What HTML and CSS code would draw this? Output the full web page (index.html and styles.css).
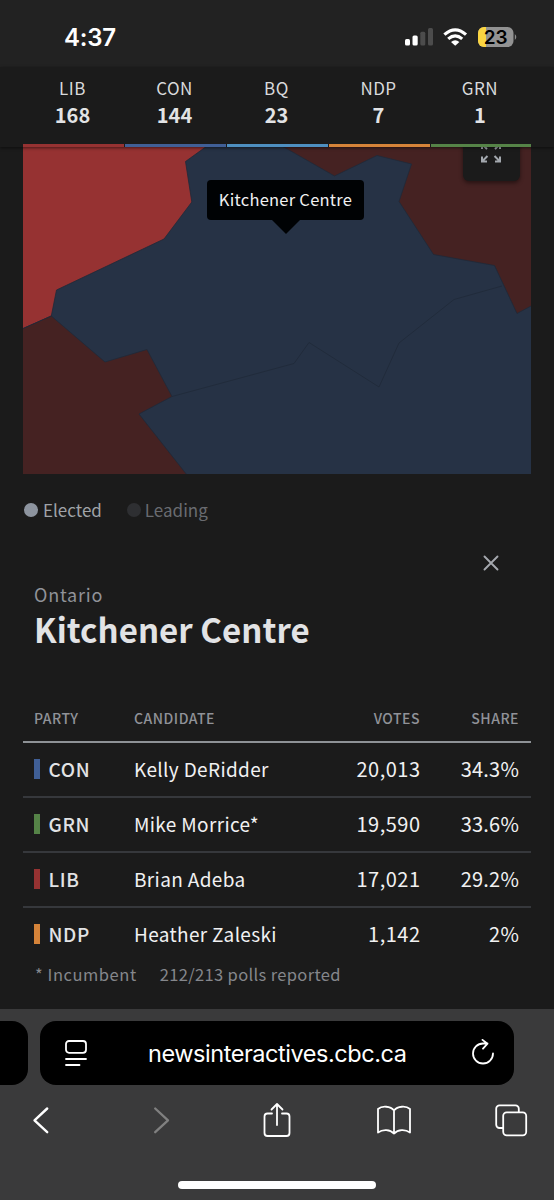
FILE: index.html
```html
<!DOCTYPE html>
<html lang="en">
<head>
<meta charset="utf-8">
<title>Kitchener Centre</title>
<link rel="stylesheet" href="styles.css">
</head>
<body>
<div class="status">
  <span class="clock">4:37</span>
  <svg class="status-icons" width="114" height="24" viewBox="403 25 114 24">
    <g fill="#fff"><rect x="405" y="39" width="5" height="6.500" rx="1.500"/><rect x="412.500" y="35.500" width="5.200" height="10" rx="1.500"/></g>
    <g fill="#4c4c4c"><rect x="420.300" y="31.700" width="5" height="13.800" rx="1.500"/><rect x="428" y="28" width="5" height="17.500" rx="1.500"/></g>
    <g fill="none" stroke="#fff" stroke-width="3.200"><path d="M444.400 34.600Q455.200 25 466 34.600"/><path d="M448.200 38.900Q455.200 33 462.200 38.900"/></g>
    <path d="M451 42Q455.200 38.500 459.400 42L455.200 45.800Z" fill="#fff"/>
    <path d="M484 27h23.500a6 6 0 0 1 6 6v8a6 6 0 0 1-6 6H484a6 6 0 0 1-6-6v-8a6 6 0 0 1 6-6Z" fill="#929292"/>
    <path d="M486 27h-2a6 6 0 0 0-6 6v8a6 6 0 0 0 6 6h2Z" fill="#fbd541"/>
    <path d="M514.800 34q3 3 0 6Z" fill="#8b8b8b"/>
    <text x="495.700" y="43.700" class="battery-text" text-anchor="middle">23</text>
  </svg>
</div>
<header class="seats">
  <div class="seat lib"><span>LIB</span><b>168</b></div>
  <div class="seat con"><span>CON</span><b>144</b></div>
  <div class="seat bq"><span>BQ</span><b>23</b></div>
  <div class="seat ndp"><span>NDP</span><b>7</b></div>
  <div class="seat grn"><span>GRN</span><b>1</b></div>
</header>
<main>
  <section class="map">
    <svg width="508" height="327" viewBox="23 147 508 327">
      <rect x="23" y="147" width="508" height="327" fill="#263245"/>
      <g stroke="#202a39" stroke-width=".8">
        <path d="M22 146H207L185.500 161.500 191.800 202 164 239 56.500 290 51.300 316 22 329Z" fill="#963232"/>
        <path d="M22 329 51.300 316 105 362 147 349.500 172 396.500 139 414 187 475H22Z" fill="#452222"/>
        <path d="M282 146 334.500 176 377 155.500 411.500 164 399 201.500 433.500 254.500 494.500 265.500 517 313.500 532 305.500V146Z" fill="#452222"/>
        <path d="M172 396.500 294 363.500 309 342.500 379 387 399 343 454 299.500 502 286" fill="none"/>
      </g>
    </svg>
    <div class="expand">
      <svg width="22" height="22" viewBox="0 0 22 22" fill="none" stroke="#a3a8ae" stroke-width="2"><path d="M2 7V2h5M2 2l5 5M15 2h5v5M20 2l-5 5M2 14.500v5h5M2 19.500l5.500-5.500M15 19.500h5v-5M20 19.500l-5.500-5.500"/></svg>
    </div>
    <div class="tooltip">Kitchener Centre</div>
  </section>
  <div class="legend"><i class="dot"></i><span>Elected</span><i class="dot dim"></i><span class="faint">Leading</span></div>
  <section class="riding">
    <svg class="close" width="18" height="18" viewBox="0 0 18 18"><path d="M2.500 2.500l13 13M15.500 2.500l-13 13" stroke="#a5a8ae" stroke-width="1.900" stroke-linecap="round"/></svg>
    <p class="province">Ontario</p>
    <h1>Kitchener Centre</h1>
    <div class="row head"><span>PARTY</span><span>CANDIDATE</span><span>VOTES</span><span>SHARE</span></div>
    <div class="row"><span class="party con">CON</span><span>Kelly DeRidder</span><span>20,013</span><span>34.3%</span></div>
    <div class="row"><span class="party grn">GRN</span><span>Mike Morrice*</span><span>19,590</span><span>33.6%</span></div>
    <div class="row"><span class="party lib">LIB</span><span>Brian Adeba</span><span>17,021</span><span>29.2%</span></div>
    <div class="row"><span class="party ndp">NDP</span><span>Heather Zaleski</span><span>1,142</span><span>2%</span></div>
    <div class="notes"><span>* Incumbent</span><span class="polls">212/213 polls reported</span></div>
  </section>
</main>
<footer class="browser">
  <div class="tabs">
    <div class="prev-tab"></div>
    <div class="address">
      <svg width="24" height="28" viewBox="0 0 24 28" fill="none" stroke="#fff" stroke-width="1.800" stroke-linecap="round"><rect x="2" y="2" width="20" height="11.800" rx="3"/><path d="M2 20h20M2 26h13.500"/></svg>
      <span>newsinteractives.cbc.ca</span>
      <svg width="24" height="28" viewBox="0 0 24 28" fill="none" stroke="#fff" stroke-width="1.800" stroke-linecap="round" stroke-linejoin="round"><path d="M22 14.500A10 10 0 1 1 12 4.500h4.500M11.500 .9l5 3.800-4.500 5"/></svg>
    </div>
  </div>
  <svg class="tools" width="554" height="44" viewBox="0 1098 554 44" fill="none" stroke="#fff" stroke-width="2" stroke-linecap="round" stroke-linejoin="round">
    <path d="M47.200 1108.500 34.500 1120.300 47.200 1132.200" stroke-width="2.400"/>
    <path d="M155.200 1108.500 168 1120.300 155.200 1132.200" stroke="#808080" stroke-width="2.300"/>
    <g stroke-width="1.800"><path d="M272 1113.500h-4.500a3 3 0 0 0-3 3v16.500a3 3 0 0 0 3 3h19a3 3 0 0 0 3-3v-16.500a3 3 0 0 0-3-3H282M277 1125v-20.500M271.500 1109.500l5.500-5.500 5.500 5.500"/>
    <path d="M394 1110.500C390.500 1106 382 1105.500 378 1109V1132.500C383 1129 390 1129.500 394 1133.500 398 1129.500 405 1129 410 1132.500V1109C406 1105.500 397.500 1106 394 1110.500ZM394 1110.500V1133.500"/>
    <path d="M503 1128h-3.500a3.300 3.300 0 0 1-3.300-3.300v-16a3.300 3.300 0 0 1 3.300-3.300h16a3.300 3.300 0 0 1 3.300 3.300v3.500"/><rect x="503.200" y="1112.300" width="23" height="23" rx="3.500"/></g>
  </svg>
  <div class="home"></div>
</footer>
</body>
</html>
```
FILE: styles.css
```css
* { box-sizing: border-box; }
body { margin: 0; width: 554px; height: 1200px; overflow: hidden; background: #1b1b1b; color: #e2e3e5; font-family: "Noto Sans CJK SC", "Noto Sans", sans-serif; display: flex; flex-direction: column; }
.status { height: 67px; flex: none; background: #222; display: flex; justify-content: space-between; align-items: center; padding: 7px 37px 0 64px; }
.clock { font: 600 24px/30px Inter, sans-serif; color: #fff; letter-spacing: -.2px; padding-top: 2px; }
.battery-text { font: 600 19px Inter, sans-serif; fill: #000; }
.seats { height: 80px; flex: none; display: grid; grid-template-columns: repeat(5, 101px); column-gap: 1px; padding: 7px 23px 0; position: relative; z-index: 1; background: #1b1b1b; box-shadow: 0 1px 3px #0008; }
.seat { display: flex; flex-direction: column; align-items: center; border-bottom: 3px solid; padding-right: 2px; }
.seat:last-child { margin-right: -1px; border-right: 0; width: 100px; }
.seat span { color: #d9dadc; font-size: 17px; line-height: 27px; letter-spacing: .5px; }
.seat b { color: #e2e3e5; font-size: 20px; line-height: 28px; }
.seat.lib { border-color: #963232; }
.seat.con { border-color: #405f96; }
.seat.bq { border-color: #4e8fc0; }
.seat.ndp { border-color: #d58339; }
.seat.grn { border-color: #558347; }
main { height: 862px; flex: none; padding: 0 23px; }
.map { height: 327px; position: relative; }
.map > svg { display: block; }
.expand { position: absolute; left: 440px; top: -23px; width: 56.500px; height: 57px; border-radius: 6px; background: #1b1b1b; box-shadow: 0 2px 4px #0007; display: flex; align-items: center; justify-content: center; }
.tooltip { position: absolute; left: 184px; top: 33px; width: 157px; height: 40px; border-radius: 4px; background: #000204; color: #f0f0f1; font-size: 16.500px; line-height: 39px; text-align: center; letter-spacing: .25px; }
.tooltip::after { content: ""; position: absolute; left: 65px; top: 40px; border: 14px solid transparent; border-top-color: #000204; border-bottom: 0; }
.legend { display: flex; align-items: center; height: 72px; padding-left: 1px; font-size: 17px; letter-spacing: 0; color: #a0a3a8; }
.legend span { position: relative; top: -1px; }
.dot { width: 14px; height: 14px; border-radius: 50%; background: #8d949f; margin-right: 5px; }
.dot.dim { background: #2e2f32; margin-left: 25px; margin-right: 4px; }
.legend .faint { color: #696b70; }
.riding { position: relative; padding-top: 35px; }
.close { position: absolute; left: 459px; top: 8px; }
.province { margin: 0 0 0 11px; font-size: 18px; line-height: 26px; letter-spacing: .8px; color: #909298; }
h1 { margin: 0 0 0 11px; font-size: 33px; line-height: 44px; letter-spacing: .05px; color: #e2e3e5; }
.row { display: grid; grid-template-columns: 100px 1fr 110px 99px; height: 55px; align-items: center; padding: 0 12px 2px 11px; border-bottom: 2px solid #36383c; font-size: 19px; letter-spacing: .35px; color: #f1f1f2; }
.row:nth-last-child(2) { border-color: transparent; }
.row span:nth-child(n+3) { text-align: right; font-size: 20px; letter-spacing: .5px; margin-right: -.5px; }
.row span:nth-child(4) { letter-spacing: .2px; margin-right: 0; }
.row.head { height: 92px; padding-top: 44px; padding-bottom: 1px; border-color: #8e9296; font-weight: 500; color: #909298; }
.row.head span:nth-child(n) { font-size: 14px; letter-spacing: .5px; margin-right: 0; }
.party { display: flex; align-items: center; font-weight: 500; letter-spacing: .6px; color: #e2e3e5; }
.party::before { content: ""; width: 6px; height: 20px; margin-right: 8.500px; background: #405f96; }
.party.grn::before { background: #558347; }
.party.lib::before { background: #963232; }
.party.ndp::before { background: #d58339; }
.notes { display: flex; gap: 23px; padding-left: 12px; margin-top: -2px; font-size: 16.500px; line-height: 26px; letter-spacing: .55px; color: #85878c; }
.polls { letter-spacing: .35px; }
.browser { height: 191px; flex: none; background: #3a3a3b; padding-top: 12px; }
.tabs { display: flex; gap: 12px; height: 64px; }
.prev-tab { width: 28px; background: #000; border-radius: 0 16px 16px 0; }
.address { width: 474px; background: #000; border-radius: 16px; display: flex; align-items: center; justify-content: space-between; padding: 0 19px 0 23.500px; color: #fff; font: 23.500px/30px Inter, sans-serif; letter-spacing: -.45px; }
.address span { margin: 1px 4px 0 0; }
.tools { display: block; margin-top: 13px; }
.home { width: 198px; height: 8px; border-radius: 4px; background: #fff; margin: 39px auto 0; }
```
